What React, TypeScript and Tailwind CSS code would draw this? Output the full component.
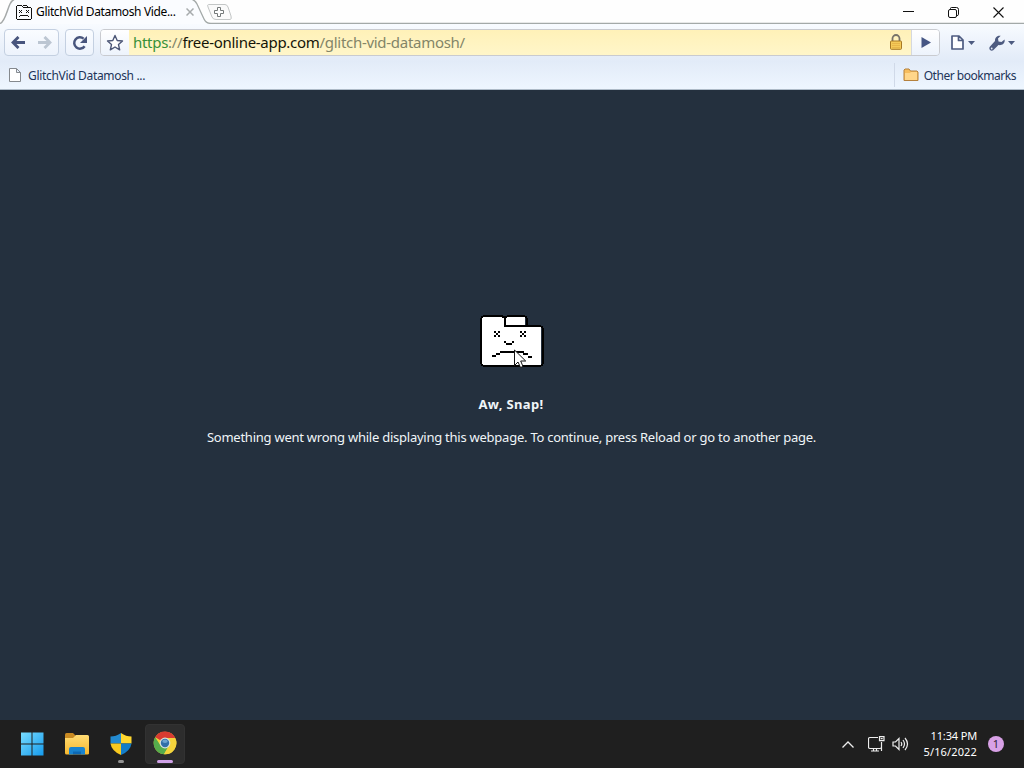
const sans = "font-['Noto_Sans','Open_Sans',sans-serif]"

function SadFolder({ className }: { className?: string }) {
  return (
    <svg viewBox="0 0 64 52" className={className} shapeRendering="crispEdges">
      <path d="M3 1h42v10h16v39H2V3z" fill="#fff" />
      <path
        d="M3 0h20v2H3zM0 3h2v46H0zM24 2h2v8h-2zM27 0h18v2H27zM46 3h2v7h-2zM24 10h37v2H24zM62 13h2v36h-2zM3 50h58v2H3z"
        fill="#000"
      />
      <path
        d="M1 1h2v2H1zM1 49h2v2H1zM61 49h2v2h-2zM61 11h2v2h-2zM45 1h2v2h-2zM22 1h3v2h-3zM25 1h2v2h-2z"
        fill="#000"
      />
      {/* eyes */}
      <path d="M14 16h2v2h-2zM18 16h2v2h-2zM16 18h2v2h-2zM14 20h2v2h-2zM18 20h2v2h-2z" fill="#000" />
      <path d="M40 16h2v2h-2zM44 16h2v2h-2zM42 18h2v2h-2zM40 20h2v2h-2zM44 20h2v2h-2z" fill="#000" />
      {/* nose and mouth */}
      <path d="M24 26h2v2h-2zM26 28h6v2h-6zM32 26h2v2h-2z" fill="#000" />
      <path d="M12 40h4v2h-4zM16 38h4v2h-4zM20 36h18v2H20zM38 36h6v2h-6zM43 38h5v2h-5zM48 41h4v2h-4z" fill="#000" />
    </svg>
  )
}

function SmallFace() {
  return (
    <svg viewBox="0 0 16 16" className="size-4 shrink-0" shapeRendering="crispEdges">
      <path
        d="M1 1h5v1H1zM0 2h1v13H0zM6 2h1v1H6zM7 3h8v1H7zM15 4h1v11h-1zM1 15h14v1H1zM7 1h4v1H7zM11 2h1v1h-1z"
        fill="#111"
      />
      <path
        d="M3 6h1v1H3zM5 6h1v1H5zM4 7h1v1H4zM3 8h1v1H3zM5 8h1v1H5zM10 6h1v1h-1zM12 6h1v1h-1zM11 7h1v1h-1zM10 8h1v1h-1zM12 8h1v1h-1zM3 12h1v1H3zM4 11h8v1H4zM12 12h1v1h-1z"
        fill="#111"
      />
    </svg>
  )
}

function TabStrip() {
  return (
    <div className="grid h-6 w-full bg-[#fefefe]">
      <svg viewBox="0 0 1024 24" className="col-start-1 row-start-1 h-6 w-[1024px]">
        <path d="M0 23.5C5 22 7 10 10 4Q12 0 15 -1H192Q195 0 197 4L204 19Q206 23.5 211 23.5V24H0z" fill="#fafcff" />
        <path d="M0 23.5C5 22 7 10 10 4Q12 0 15 -1" fill="none" stroke="#a5a9a9" strokeWidth="1.5" />
        <path d="M191 -1Q195 0 197 4L204 19Q206 23.5 211 23.5H1024" fill="none" stroke="#a3a9a8" strokeWidth="1.3" />
        <path
          d="M208.5 4.5H225Q227 4.5 228 7L231 16Q232 19.5 230 19.5H216Q213 19.5 212 17L208 7Q207 4.5 208.5 4.5z"
          fill="#fafafa"
          stroke="#c3c6c6"
        />
        <path d="M217.5 7.5h3v3h3v3h-3v3h-3v-3h-3v-3h3z" fill="#fff" stroke="#747979" strokeLinejoin="round" />
      </svg>
      <div className="col-start-1 row-start-1 flex h-6 items-center pl-4 text-xs text-black">
        <SmallFace />
        <span className="ml-1 w-[146px] tracking-[-0.35px] whitespace-nowrap">GlitchVid Datamosh Vide...</span>
        <svg viewBox="0 0 8 8" className="ml-[4px] size-2">
          <path d="M.5.5l7 7M7.5.5l-7 7" stroke="#a7abad" strokeWidth="1.5" />
        </svg>
        <div className="ml-auto flex items-center gap-[34px] pr-5">
          <svg viewBox="0 0 11 11" className="size-[11px]">
            <path d="M0 4.5h11" stroke="#111" />
          </svg>
          <svg viewBox="0 0 11 11" className="size-[11px]" fill="none" stroke="#111">
            <rect x=".5" y="2.5" width="8" height="8" rx="1.5" />
            <path d="M2.5 2V1.5q0-1 1-1H8.5q2 0 2 2V7.5q0 1-1.5 1" />
          </svg>
          <svg viewBox="0 0 11 11" className="size-[11px]">
            <path d="M.5.5l10 10M10.5.5l-10 10" stroke="#111" strokeWidth="1.1" />
          </svg>
        </div>
      </div>
    </div>
  )
}

function Caret() {
  return (
    <svg viewBox="0 0 7 4" className="h-1 w-[7px]">
      <path d="M0 0h7L3.5 4z" fill="#4d5b80" />
    </svg>
  )
}

function Toolbar() {
  return (
    <div className="flex h-[37px] items-start bg-linear-to-b from-[#f8fbff] to-[#e2ebf8] pt-[5px] pl-1">
      <div className="flex h-[27px] w-[55px] items-center justify-between rounded border border-[#c4d0e1] bg-linear-to-b from-[#fafcff] to-[#edf3fc] px-[6px]">
        <svg viewBox="0 0 14 13" className="h-[13px] w-[14px]" fill="none" stroke="#48557d" strokeWidth="2.8">
          <path d="M7.5.9L2 6.5l5.5 5.6M2 6.5h12" />
        </svg>
        <svg viewBox="0 0 14 13" className="h-[13px] w-[14px]" fill="none" stroke="#bcc6d2" strokeWidth="2.8">
          <path d="M6.5.9L12 6.5l-5.5 5.6M12 6.5H0" />
        </svg>
      </div>
      <div className="ml-[6px] flex h-[27px] w-[29px] items-center justify-center rounded border border-[#c4d0e1] bg-linear-to-b from-[#fafcff] to-[#edf3fc]">
        <svg viewBox="0 0 16 16" className="size-4">
          <path d="M12.6 11.2A5.7 5.7 0 1 1 11.6 3.6" fill="none" stroke="#48557d" strokeWidth="2.5" />
          <path d="M15 1v7H8z" fill="#48557d" />
        </svg>
      </div>
      <div className="ml-[6px] flex h-[27px] w-[840px] overflow-hidden rounded border border-[#c9cbd0]">
        <div className="flex w-7 items-center justify-center bg-linear-to-b from-white to-[#edf3fc]">
          <svg viewBox="0 0 18 17" className="h-[17px] w-[18px]">
            <path
              d="M9 1.5l2.2 5 5.3.5-4 3.6 1.2 5.2L9 13l-4.7 2.8 1.2-5.2-4-3.6 5.300-.5z"
              fill="#fff"
              stroke="#4d5777"
              strokeWidth="1.4"
              strokeLinejoin="round"
            />
          </svg>
        </div>
        <div className="flex flex-1 items-center bg-linear-to-b from-[#fff1b8] to-[#fff6c9] pr-2 pl-1">
          <span className="text-[15px] tracking-[-0.29px] whitespace-nowrap text-[#838568]">
            <span className="text-[#379139]">https</span>://<span className="text-[#141408]">free-online-app.com</span>
            /glitch-vid-datamosh/
          </span>
          <svg viewBox="0 0 14 16" className="mb-px ml-auto h-4 w-[14px]">
            <path d="M3.5 8V4.5a3.5 3.5 0 0 1 7 0V8" fill="none" stroke="#77736a" strokeWidth="1.8" />
            <rect x="1.5" y="7" width="11" height="8.3" rx=".8" fill="#f4ca59" stroke="#a77924" />
            <path d="M3 9.500h8M3 11.500h8M3 13.500h8" stroke="#e8b64a" />
          </svg>
        </div>
        <div className="flex w-[28px] items-center justify-center border-l border-[#d5d8df] bg-linear-to-b from-white to-[#edf3fc]">
          <svg viewBox="0 0 10 11" className="h-[11px] w-[10px]">
            <path d="M.5 0L10 5.5.5 11z" fill="#465684" />
          </svg>
        </div>
      </div>
      <div className="flex h-[27px] items-center pl-[11px]">
        <svg viewBox="0 0 13 15" className="h-[15px] w-[13px]" fill="#fff" stroke="#4d5b80" strokeWidth="1.7">
          <path d="M1 1h7l4 4v9H1zM7.5 1v4.5H12" strokeLinejoin="round" />
        </svg>
        <span className="ml-1">
          <Caret />
        </span>
        <svg viewBox="0 0 16 16" className="ml-[14px] size-4">
          <path
            d="M15.500 4.500L12.500 7 9.500 6.500 9 3.500 11.700.8C8.500.2 5.700 2.500 6 6L.8 11.800C-.8 14 2 16.800 4.200 15.200L9.500 10C13 10.800 16.500 8 15.500 4.500z"
            fill="#4d5b80"
          />
          <circle cx="2.7" cy="13.5" r=".9" fill="#e5edf8" />
        </svg>
        <span className="ml-[3px]">
          <Caret />
        </span>
      </div>
    </div>
  )
}

function BookmarksBar() {
  return (
    <div className="flex h-[29px] items-center border-b border-[#aebbc8] bg-linear-to-b from-[#e2ebf8] to-[#eef6ff] pr-2 pl-[9px] text-xs text-[#223459]">
      <svg viewBox="0 0 12 14" className="h-[14px] w-3" fill="#fff" stroke="#85898e">
        <path d="M.5.5h7l4 4v9H.5zM7.5.5v4h4" />
      </svg>
      <span className="ml-[7px] pt-[2px] tracking-[-0.32px] whitespace-nowrap">GlitchVid Datamosh ...</span>
      <div className="ml-auto flex h-6 items-center border-l border-[#d0d9e8] pl-2">
        <svg viewBox="0 0 16 14" className="h-[14px] w-4">
          <path d="M1 12.500V2l1-1h4l1.500 2H14l1 1v8.500z" fill="#f6bd5e" stroke="#b5813d" />
          <path d="M2 12V5h5l1-1h6v8z" fill="#ffd68a" />
        </svg>
        <span className="ml-[5px] pt-[2px] tracking-[-0.47px] whitespace-nowrap">Other bookmarks</span>
      </div>
    </div>
  )
}

function CrashPage() {
  return (
    <main className="flex h-[630px] flex-col items-center bg-[#24303e] pt-[225px] text-[#f0f5f8]">
      <div className="relative h-[52px] w-16">
        <SadFolder className="h-[52px] w-16" />
        {/* mouse pointer */}
        <svg viewBox="0 0 13 20" className="absolute top-[34px] left-[34px] h-5 w-[13px]">
          <path d="M.5 1v15.5L4 13l2.500 5.500 2.500-1L6.700 12h5z" fill="#fff" stroke="#111" strokeWidth="1" />
        </svg>
      </div>
      <h1 className="mt-[27px] -ml-[2px] text-[13px] leading-5 font-bold tracking-[0.35px]">Aw, Snap!</h1>
      <p className="mt-[13px] -ml-[1px] text-[13px] leading-5 tracking-[-0.245px] whitespace-nowrap">
        Something went wrong while displaying this webpage. To continue, press Reload or go to another page.
      </p>
    </main>
  )
}

function Chrome() {
  return (
    <svg viewBox="0 0 24 24" className="size-6">
      <circle cx="12" cy="12" r="11.3" fill="#f4d43c" />
      <path d="M12 12L2.200 6.300A11.300 11.300 0 0 1 22.200 7H12z" fill="#d93b31" />
      <path d="M2.200 6.300A11.300 11.300 0 0 0 11 23.300L16 14.500 7.500 14.500z" fill="#56ad4c" />
      <path d="M12 7h10.200A11.300 11.300 0 0 1 11 23.300l5.300-9z" fill="#f4d43c" />
      <circle cx="12" cy="12" r="5.4" fill="#d9e2dc" />
      <circle cx="12" cy="12" r="4.2" fill="#326fa9" />
      <ellipse cx="12" cy="10.3" rx="2.7" ry="1.7" fill="#6da4d0" />
    </svg>
  )
}

function Taskbar() {
  return (
    <footer className="flex h-12 items-center bg-[#1f1f1f] pl-3 text-white">
      <div className="flex gap-1">
        <div className="flex size-10 items-center justify-center">
          <svg viewBox="0 0 24 24" className="size-6">
            <defs>
              <linearGradient id="win" x1="0" y1="0" x2="1" y2="1">
                <stop stopColor="#78dcff" />
                <stop offset="1" stopColor="#159bed" />
              </linearGradient>
            </defs>
            <path
              d="M1 .5h10.500V11.500H1zM12.500.5H23.500V11.500H12.500zM1 12.500h10.500v11H1zM12.500 12.500h11v11h-11z"
              fill="url(#win)"
            />
          </svg>
        </div>
        <div className="ml-px flex size-10 items-center justify-center">
          <svg viewBox="0 0 26 24" className="h-6 w-[26px]">
            <defs>
              <linearGradient id="files" x1="0" y1="0" x2="0" y2="1">
                <stop stopColor="#ffdc74" />
                <stop offset="1" stopColor="#f7b72d" />
              </linearGradient>
            </defs>
            <path d="M1 6V2.500Q1 1 2.500 1H9l3 3-3 3z" fill="#c98a22" />
            <path d="M1 6h8l3-3h11.500Q25 3 25 4.500V21.500Q25 22.500 23.500 22.500H2.500Q1 22.500 1 21z" fill="url(#files)" />
            <path d="M5 22.500V17q0-2 2-2h12q2 0 2 2v5.500h-4V20H9v2.500z" fill="#1883cf" />
            <path d="M9 19.500h8v3H9z" fill="#0d68b4" />
          </svg>
        </div>
        <div className="flex size-10 flex-col items-center pt-2">
          <svg viewBox="0 0 24 24" className="size-6">
            <path d="M12 1Q7 4.500 1.500 4.500V11.500H12z" fill="#238ad0" />
            <path d="M12 1q5 3.500 10.500 3.500v7H12z" fill="#ffd72f" />
            <path d="M1.500 11.500H12V23Q2.500 19 1.500 11.500z" fill="#f8c91f" />
            <path d="M12 11.500h10.500Q21.500 19 12 23z" fill="#137dc8" />
          </svg>
          <div className="mt-1 h-[3px] w-[6px] rounded-full bg-[#929292]" />
        </div>
        <div className="flex size-10 flex-col items-center rounded border border-[#323232] bg-[#2d2d2d] pt-[6px]">
          <Chrome />
          <div className="mt-[5px] h-[3px] w-4 shrink-0 rounded-full bg-[#d0a2e8]" />
        </div>
      </div>
      <div className="ml-auto flex items-center pr-2">
        <svg viewBox="0 0 12 7" className="h-[7px] w-3" fill="none" stroke="#eee" strokeWidth="1.3">
          <path d="M.5 6.500L6 1l5.500 5.500" />
        </svg>
        <svg viewBox="0 0 17 16" className="ml-[14px] h-4 w-[17px]" fill="none" stroke="#eee" strokeWidth="1.2">
          <path d="M10 1.500H2q-1.500 0-1.500 1.500v8q0 1.500 1.500 1.500h10q1.500 0 1.500-1.500V6M5.500 12.500V15M3 15h8M8.500 12.500V15M13.500 6v9" />
          <path d="M11.500.7h4.500v4h-4.500zM12.700 2.700h2" />
        </svg>
        <svg viewBox="0 0 17 14" className="ml-[7px] h-[14px] w-[17px]" fill="none" stroke="#eee" strokeWidth="1.2">
          <path d="M1 5h2.500L7 1.500v11L3.500 9H1zM9 5q1.500 2 0 4M11 3q3 4 0 8M13 1q5 6 0 12" />
        </svg>
        <div className="ml-[14px] flex w-[54px] flex-col items-end text-[11px] leading-4 whitespace-nowrap">
          <span className="tracking-[-0.15px]">11:34 PM</span>
          <span className="tracking-[0.14px]">5/16/2022</span>
        </div>
        <div className="mr-[12px] ml-[11px] flex size-4 items-center justify-center rounded-full bg-[#d8a1e6] text-[11px] leading-4 text-[#302438]">
          1
        </div>
      </div>
    </footer>
  )
}

export default function App() {
  return (
    <div className={`flex h-[768px] w-[1024px] flex-col overflow-hidden ${sans}`}>
      <TabStrip />
      <Toolbar />
      <BookmarksBar />
      <CrashPage />
      <Taskbar />
    </div>
  )
}
